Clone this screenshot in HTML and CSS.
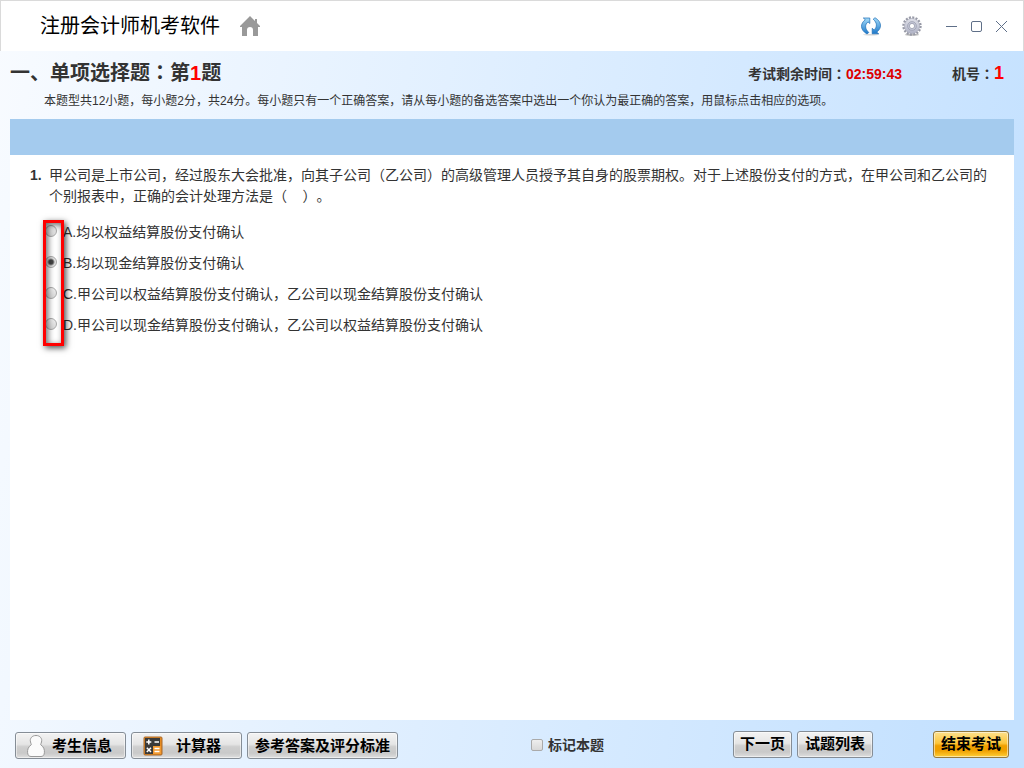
FILE: index.html
```html
<!DOCTYPE html>
<html lang="zh-CN">
<head>
<meta charset="utf-8">
<title>注册会计师机考软件</title>
<link rel="stylesheet" href="styles.css">
</head>
<body>
<header class="titlebar">
  <h1 class="app-name">注册会计师机考软件</h1>
  <button class="icon-btn home" aria-label="主页">
    <svg width="20" height="20" viewBox="0 0 20 20"><path fill="#999" d="M10 0 15 5V3h2v4l3 3v1h-2v9h-5v-6a3 3 0 0 0-6 0v6H2v-9H0v-1z"/></svg>
  </button>
  <div class="tools">
    <button class="icon-btn" aria-label="刷新">
      <svg width="20" height="20" viewBox="0 0 20 20">
        <defs>
          <linearGradient id="blue" x1="0" y1="0" x2="0" y2="1"><stop offset="0" stop-color="#a5dcfa"/><stop offset="1" stop-color="#1c78ca"/></linearGradient>
        </defs>
        <ellipse cx="10" cy="18.700" rx="8" ry=".8" fill="#d5d5d5"/>
        <path fill="url(#blue)" stroke="#1d6db5" stroke-width=".7" d="M2.300 2H8.800v5.500L7 5.900C3.600 8.800 3.800 12.800 7.800 16.500L6 18C-1.200 13.800-.9 7.500 4.300 3.700z"/>
        <path fill="url(#blue)" stroke="#1d6db5" stroke-width=".7" d="M17.700 17.800h-6.500v-5.500l1.800 1.600c3.400-2.900 3.200-7.200-.8-10.700L14 1.700c7.200 4.200 6.900 10.700 1.700 14.400z"/>
      </svg>
    </button>
    <button class="icon-btn" aria-label="设置">
      <svg width="20" height="20" viewBox="0 0 20 20">
        <defs>
          <linearGradient id="steel" x1="0" y1="0" x2="0" y2="1"><stop offset="0" stop-color="#dfe0e8"/><stop offset="1" stop-color="#b0b3c6"/></linearGradient>
        </defs>
        <ellipse cx="10" cy="18.800" rx="7" ry="1" fill="#bbb"/>
        <circle cx="10" cy="10" r="8.500" fill="none" stroke="#9799a6" stroke-width="2.400" stroke-dasharray="2 1.338"/>
        <circle cx="10" cy="10" r="7.600" fill="url(#steel)" stroke="#a4a6b5" stroke-width=".6"/>
        <circle cx="10" cy="10" r="4.400" fill="#c3c6d6" stroke="#999cad" stroke-width=".7"/>
        <circle cx="10" cy="10" r="2.600" fill="#fff" stroke="#8e91a3" stroke-width=".7"/>
      </svg>
    </button>
  </div>
  <div class="window-controls">
    <button class="icon-btn" aria-label="最小化"><svg width="13" height="13" viewBox="0 0 13 13"><path class="line" d="M1 6.500h11"/></svg></button>
    <button class="icon-btn" aria-label="最大化"><svg width="13" height="13" viewBox="0 0 13 13"><rect class="line" x="1.500" y="1.500" width="10" height="10" rx="1.500"/></svg></button>
    <button class="icon-btn" aria-label="关闭"><svg width="13" height="13" viewBox="0 0 13 13"><path class="line" d="m1 1 11 11M12 1 1 12"/></svg></button>
  </div>
</header>
<section class="intro">
  <div class="intro-row">
    <h2 class="section-title">一、单项选择题<span class="mid" lang="zh-TW">：</span>第<span class="red">1</span>题</h2>
    <p class="status">考试剩余时间<span class="mid" lang="zh-TW">：</span><span class="time">02:59:43</span></p>
    <p class="status seat">机号<span class="mid" lang="zh-TW">：</span><span class="seat-number">1</span></p>
  </div>
  <p class="rules">本题型共12小题，每小题2分，共24分。每小题只有一个正确答案，请从每小题的备选答案中选出一个你认为最正确的答案，用鼠标点击相应的选项。</p>
</section>
<main class="paper">
  <div class="band"></div>
  <div class="question">
    <span class="number">1.</span>
    <p class="stem" id="stem">甲公司是上市公司，经过股东大会批准，向其子公司（乙公司）的高级管理人员授予其自身的股票期权。对于上述股份支付的方式，在甲公司和乙公司的个别报表中，正确的会计处理方法是（&nbsp;&nbsp;&nbsp;&nbsp;）。</p>
  </div>
  <div class="options" role="radiogroup" aria-labelledby="stem">
    <label class="option"><input type="radio" name="answer" class="radio">A.均以权益结算股份支付确认</label>
    <label class="option"><input type="radio" name="answer" class="radio" checked>B.均以现金结算股份支付确认</label>
    <label class="option"><input type="radio" name="answer" class="radio">C.甲公司以权益结算股份支付确认，乙公司以现金结算股份支付确认</label>
    <label class="option"><input type="radio" name="answer" class="radio">D.甲公司以现金结算股份支付确认，乙公司以权益结算股份支付确认</label>
    <div class="marker"></div>
  </div>
</main>
<footer class="footer">
  <div class="group left">
    <button class="btn candidate">
      <svg width="20" height="24" viewBox="0 0 20 24"><path fill="#fbfbfb" stroke="#999" d="M10 1.500c4 0 6.500 3 5.500 6.500-.3 1.300-.8 2-.8 2.700 3 2 4 5 3.700 8-.2 2.500-1.500 3.800-3.400 3.800H5c-1.900 0-3.200-1.300-3.400-3.800-.3-3 .7-6 3.700-8 0-.7-.5-1.400-.8-2.700C3.500 4.500 6 1.500 10 1.500z"/></svg>
      考生信息
    </button>
    <button class="btn calculator">
      <svg width="20" height="20" viewBox="0 0 20 20">
        <rect x="1" y="1" width="18" height="18" rx="1" fill="#e58a20" stroke="#a8682a"/>
        <path fill="#3a3a3a" d="M2 2h8v8H2zm8 0h7v8h-7zM2 10h8v8H2z"/>
        <path fill="#f39a30" d="M10 10h8v8h-8z"/>
        <path fill="none" stroke="#fff" stroke-width="1.500" d="M3.300 6h5M5.800 3.500v5M11.500 6H16M3.800 11.800l4.200 4.200M8 11.800 3.800 16M11.500 12.500h5M11.500 15.500h5"/>
      </svg>
      计算器
    </button>
    <button class="btn wide">参考答案及评分标准</button>
  </div>
  <label class="mark"><input type="checkbox" class="check">标记本题</label>
  <div class="group right">
    <button class="btn">下一页</button>
    <button class="btn list">试题列表</button>
    <button class="btn finish">结束考试</button>
  </div>
</footer>
</body>
</html>
```
FILE: styles.css
```css
* { box-sizing: border-box; }
body {
  margin: 0;
  min-height: 100vh;
  display: flex;
  flex-direction: column;
  color: #333;
  font: 14px/21px "Liberation Sans", "Noto Sans CJK SC", sans-serif;
  text-spacing-trim: space-all;
  background: linear-gradient(100deg, #f8fbff 0%, #c4e1ff 94%);
}
h1, h2, p { margin: 0; }
button { font-family: inherit; }
.mid { font-family: "Noto Sans CJK TC", sans-serif; line-height: 1; }

.titlebar {
  display: flex;
  align-items: center;
  height: 51px;
  padding: 0 15px 0 39px;
  background: #fff;
  border: 1px solid #dadada;
  border-bottom: 0;
}
.app-name {
  color: #000;
  font-size: 20px;
  line-height: 30px;
  font-weight: 400;
}
.icon-btn {
  display: flex;
  padding: 0;
  border: 0;
  background: none;
}
.home { margin-left: 20px; }
.tools {
  display: flex;
  gap: 21px;
  margin-left: auto;
}
.window-controls {
  display: flex;
  gap: 12px;
  margin-left: 23px;
}
.line {
  fill: none;
  stroke: #5f6f88;
}

.intro {
  height: 68px;
  padding: 6px 20px 0 10px;
}
.intro-row {
  display: flex;
  align-items: center;
  height: 30px;
}
.section-title {
  margin-right: auto;
  padding-top: 2px;
  font-size: 20px;
  line-height: 30px;
}
.status {
  padding-top: 4px;
  font-weight: 700;
}
.seat { margin-left: 50px; }
.red { color: #f00; }
.time { color: #d00; }
.seat-number {
  color: #f00;
  font-size: 18px;
}
.rules {
  padding: 4px 0 0 34px;
  font-size: 12px;
}

.paper {
  flex: 1;
  margin: 0 10px;
  background: #fff;
}
.band {
  height: 36px;
  background: #a4cbee;
}
.question {
  display: flex;
  padding: 10px 24px 10px 20px;
}
.number {
  flex: none;
  width: 19px;
  font-weight: 700;
}
.options {
  position: relative;
  display: flex;
  flex-direction: column;
  align-items: flex-start;
  padding-left: 35px;
}
.option {
  display: flex;
  align-items: center;
  gap: 6px;
  height: 31px;
}
.radio, .check {
  appearance: none;
  flex: none;
  width: 12px;
  height: 12px;
  margin: 0;
  border: 1px solid #aaa;
  background: linear-gradient(#eee, #d8d8d8);
}
.radio {
  margin-bottom: 3px;
  border-radius: 50%;
}
.radio:checked { background: radial-gradient(circle, #444 0 2px, #e2e2e2 4px); }
.marker {
  position: absolute;
  top: 3px;
  left: 33px;
  width: 21px;
  height: 126px;
  border: 3px solid #f00;
  box-shadow: 2px 2px 6px rgba(0, 0, 0, .7), inset 2px 2px 6px rgba(0, 0, 0, .6);
  pointer-events: none;
}

.footer {
  display: flex;
  align-items: center;
  height: 48px;
  padding: 0 15px;
}
.group {
  display: flex;
  gap: 5px;
}
.left { padding-top: 3px; }
.btn {
  display: flex;
  align-items: center;
  justify-content: center;
  height: 27px;
  padding: 0 6px;
  color: #000;
  font-size: 15px;
  line-height: 20px;
  font-weight: 700;
  white-space: nowrap;
  border: 1px solid #858d96;
  border-radius: 3px;
  background: linear-gradient(#f3f3f3 0%, #e5e5e5 45%, #cfcfcf 55%, #c9c9c9 80%, #dedede 100%);
  box-shadow: inset 0 0 0 1px rgba(255, 255, 255, .5);
}
.candidate {
  gap: 6px;
  padding: 0 13px 0 10px;
}
.calculator {
  gap: 13px;
  padding: 0 20px 0 11px;
}
.wide, .list, .finish { padding: 0 7px; }
.mark {
  display: flex;
  align-items: center;
  gap: 5px;
  margin: 0 auto;
  padding: 2px 0 0 4px;
  font-weight: 700;
}
.check { border-radius: 2px; }
.finish {
  margin-left: 55px;
  border-color: #94793d;
  background: linear-gradient(#fde08c 0%, #fcc63c 45%, #f0a000 55%, #efa000 75%, #ffd038 100%);
}
```
